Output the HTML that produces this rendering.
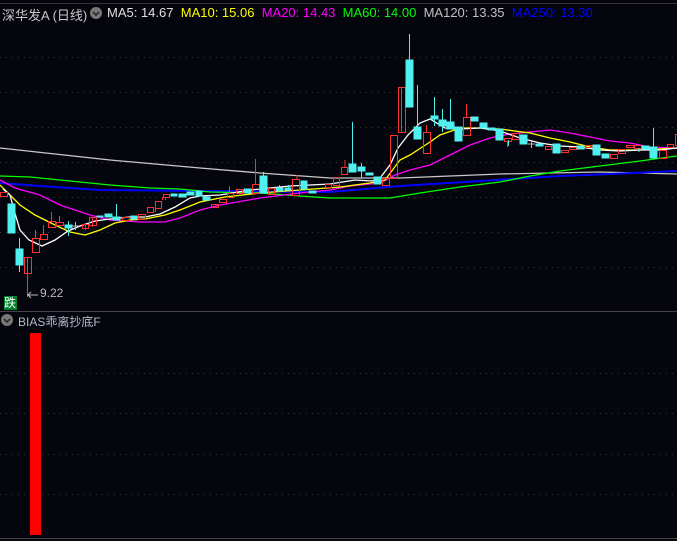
<!DOCTYPE html><html><head><meta charset="utf-8"><style>
body{margin:0;background:#05050d;width:677px;height:541px;overflow:hidden;font-family:"Liberation Sans","Noto Sans CJK SC",sans-serif}
.t{position:absolute;font-size:13px;white-space:nowrap}
</style></head><body>
<svg width="677" height="541" style="position:absolute;left:0;top:0">
<line x1="0" y1="3.5" x2="677" y2="3.5" stroke="#333"/>
<g stroke="#3a3a3a" stroke-dasharray="1,5">
<line x1="0" y1="57.5" x2="677" y2="57.5"/><line x1="0" y1="92.5" x2="677" y2="92.5"/><line x1="0" y1="127.5" x2="677" y2="127.5"/><line x1="0" y1="162.5" x2="677" y2="162.5"/><line x1="0" y1="197.5" x2="677" y2="197.5"/><line x1="0" y1="232.5" x2="677" y2="232.5"/><line x1="0" y1="267.5" x2="677" y2="267.5"/>
<line x1="0" y1="373.5" x2="677" y2="373.5"/><line x1="0" y1="413.5" x2="677" y2="413.5"/><line x1="0" y1="454.5" x2="677" y2="454.5"/><line x1="0" y1="494.5" x2="677" y2="494.5"/>
</g>
<line x1="0" y1="311.5" x2="677" y2="311.5" stroke="#444"/>
<line x1="0" y1="538.5" x2="677" y2="538.5" stroke="#444"/>
<g fill="none" stroke-width="1.3">
<polyline stroke="#c8c8c8" points="0,148 110,160 200,168 260,173 330,178 400,178 450,176 500,174 550,173 600,172 677,174"/>
<polyline stroke="#0000ff" stroke-width="2" points="0,183 40,186 100,190 200,191 330,192 400,186 480,181 560,176 610,174 677,171"/>
<polyline stroke="#00ff00" points="0,176 30,177 70,181 110,185 150,188 180,189 210,192 260,193 300,196 330,198 390,198 420,193 460,187 500,182 530,176 560,171 600,166 640,161 677,156"/>
<polyline stroke="#ff00ff" points="0,180 15,188 40,195 60,205 90,215 110,220 140,222 165,222 180,218 200,210 220,205 260,198 300,193 330,190 350,186 380,183 395,175 410,170 430,165 450,155 470,145 490,138 510,134 530,132 550,130 570,133 590,137 610,141 630,143 650,147 677,148"/>
<polyline stroke="#ffff00" points="0,185 10,195 20,205 35,215 55,225 70,232 85,235 100,230 115,223 130,220 145,219 165,215 180,210 200,202 225,197 260,193 300,190 340,187 370,183 385,180 400,160 410,155 430,142 440,135 460,128 480,128 500,129 530,133 550,138 570,142 590,147 610,150 640,150 677,148"/>
<polyline stroke="#ffffff" points="3,189 10,195 14,210 20,230 29,240 42,246 55,240 68,231 80,226 95,221 110,219 130,217 145,217 160,214 175,207 190,198 200,196 220,195 250,190 290,186 330,184 355,180 372,181 380,178 390,165 398,148 408,135 420,123 430,119 445,128 460,129 480,128 500,131 520,138 540,143 560,146 580,147 600,150 620,151 640,150 660,150 677,148"/>
</g>
<g stroke="#ff3030" fill="none">
<path d="M27.5 257V293M35.5 238V230M43.5 234V225M51.5 221V212M59.5 222V216M85.5 224V230M92.5 217V227M155.5 208V212M165.5 200V197M162.5 197V200M229.5 193V186M255.5 184V159M345 167V160M426.5 132V125M466.5 117V104M507.5 141V147M297 179V175M401.5 87V132"/>
<rect x="0.5" y="192.5" width="7" height="4"/><rect x="24.5" y="257.5" width="7" height="16"/><rect x="32.5" y="238.5" width="7" height="14"/><rect x="40.5" y="234.5" width="7" height="5"/><rect x="48.5" y="221.5" width="7" height="6"/><rect x="56.5" y="222.5" width="7" height="3"/><rect x="82.5" y="224.5" width="6" height="4"/><rect x="89.5" y="217.5" width="7" height="8"/><rect x="122.5" y="217.5" width="7" height="3"/><rect x="138.5" y="214.5" width="7" height="5"/><rect x="147.5" y="207.5" width="6" height="5"/><rect x="155.5" y="201.5" width="6" height="7"/><rect x="163.5" y="194.5" width="6" height="3"/><rect x="211.5" y="204.5" width="7" height="3"/><rect x="219.5" y="199.5" width="7" height="3"/><rect x="227.5" y="193.5" width="6" height="4"/><rect x="236.5" y="189.5" width="6" height="4"/><rect x="252.5" y="184.5" width="7" height="9"/><rect x="268.5" y="188.5" width="6" height="6"/><rect x="292.5" y="179.5" width="7" height="16"/><rect x="325.5" y="184.5" width="6" height="3"/><rect x="333.5" y="177.5" width="6" height="8"/><rect x="341.5" y="167.5" width="6" height="7"/><rect x="382.5" y="178.5" width="7" height="7"/><rect x="390.5" y="135.5" width="7" height="43"/><rect x="398.5" y="87.5" width="7" height="45"/><rect x="423.5" y="132.5" width="7" height="21"/><rect x="463.5" y="117.5" width="7" height="18"/><rect x="504.5" y="138.5" width="7" height="3"/><rect x="512.5" y="133.5" width="7" height="6"/><rect x="545.5" y="146.5" width="6" height="3"/><rect x="561.5" y="150.5" width="7" height="2"/><rect x="569.5" y="147.5" width="7" height="2"/><rect x="585.5" y="145.5" width="7" height="2"/><rect x="610.5" y="154.5" width="7" height="4"/><rect x="618.5" y="149.5" width="7" height="4"/><rect x="626.5" y="145.5" width="7" height="2"/><rect x="634.5" y="145.5" width="7" height="3"/><rect x="659.5" y="150.5" width="7" height="8"/><rect x="667.5" y="144.5" width="6" height="3"/><rect x="675.5" y="134.5" width="4" height="11"/>
</g>
<g stroke="#50f0f0" fill="#50f0f0">
<path d="M19.5 238V272M68.5 221V236M116.5 217V211M116.5 220V204M263.5 176V172M279.5 188V185M288.5 188V185M352.5 164V122M361.5 167V163M361.5 171V178M409.5 60V34M417.5 127V85M434.5 116V97M434.5 119V126M442.5 120V109M442.5 126V132M450.5 122V99M508.5 140V146M639 148V152M653.5 147V128"/>
<rect x="8" y="204" width="7" height="29"/><rect x="16" y="249" width="7" height="16"/><rect x="65" y="225" width="7" height="3"/><rect x="97" y="216" width="6" height="1"/><rect x="105" y="214" width="7" height="3"/><rect x="113" y="217" width="7" height="3"/><rect x="131" y="216" width="6" height="3"/><rect x="171" y="194" width="6" height="2"/><rect x="179" y="194" width="7" height="3"/><rect x="187" y="192" width="7" height="3"/><rect x="196" y="191" width="6" height="5"/><rect x="203" y="197" width="7" height="3"/><rect x="244" y="189" width="7" height="4"/><rect x="260" y="176" width="7" height="17"/><rect x="276" y="188" width="7" height="3"/><rect x="285" y="188" width="6" height="2"/><rect x="301" y="181" width="6" height="8"/><rect x="309" y="191" width="7" height="2"/><rect x="349" y="164" width="7" height="8"/><rect x="358" y="167" width="7" height="4"/><rect x="366" y="173" width="7" height="2"/><rect x="374" y="177" width="7" height="7"/><rect x="406" y="60" width="7" height="47"/><rect x="414" y="127" width="7" height="12"/><rect x="431" y="116" width="7" height="3"/><rect x="439" y="120" width="7" height="6"/><rect x="447" y="122" width="7" height="7"/><rect x="455" y="127" width="7" height="14"/><rect x="471" y="117" width="7" height="4"/><rect x="480" y="123" width="7" height="5"/><rect x="488" y="128" width="7" height="2"/><rect x="496" y="129" width="7" height="11"/><rect x="520" y="135" width="7" height="9"/><rect x="536" y="144" width="7" height="2"/><rect x="553" y="144" width="7" height="9"/><rect x="577" y="146" width="7" height="3"/><rect x="593" y="145" width="7" height="10"/><rect x="602" y="154" width="7" height="4"/><rect x="642" y="146" width="7" height="3"/><rect x="650" y="147" width="7" height="11"/>
</g>
<path d="M75.5 222V230M72 226H79M531.5 141V148M528 144H535" stroke="#bbb"/>
<line x1="27.5" y1="293" x2="27.5" y2="297" stroke="#ff3030"/>
<path d="M27 295H38M31 292L28 295L31 298" stroke="#bbb" fill="none"/>
<rect x="30" y="333" width="11" height="202" fill="#ff0000"/>
<circle cx="96" cy="13" r="6" fill="#777"/><path d="M93 12L96 15L99 12" stroke="#222" stroke-width="1.5" fill="none"/>
<circle cx="7" cy="320" r="6" fill="#777"/><path d="M4 319L7 322L10 319" stroke="#222" stroke-width="1.5" fill="none"/>
</svg>
<div class="t" style="left:2px;top:5px;color:#c8c8c8">深华发A (日线)</div>
<div class="t" style="left:107px;top:5px"><span style="color:#e0e0e0">MA5: 14.67</span>&nbsp; <span style="color:#ffff00">MA10: 15.06</span>&nbsp; <span style="color:#ff00ff">MA20: 14.43</span>&nbsp; <span style="color:#00ff00">MA60: 14.00</span>&nbsp; <span style="color:#c0c0c0">MA120: 13.35</span>&nbsp; <span style="color:#0000ff">MA250: 13.30</span></div>
<div class="t" style="left:40px;top:286px;color:#bbb;font-size:12px">9.22</div>
<div class="t" style="left:4px;top:296px;width:13px;height:14px;background:#00802a;color:#fff;font-size:12px;line-height:14px">跌</div>
<div class="t" style="left:18px;top:313px;color:#b8b8c8;font-size:12px">BIAS乖离抄底F</div>
</body></html>
